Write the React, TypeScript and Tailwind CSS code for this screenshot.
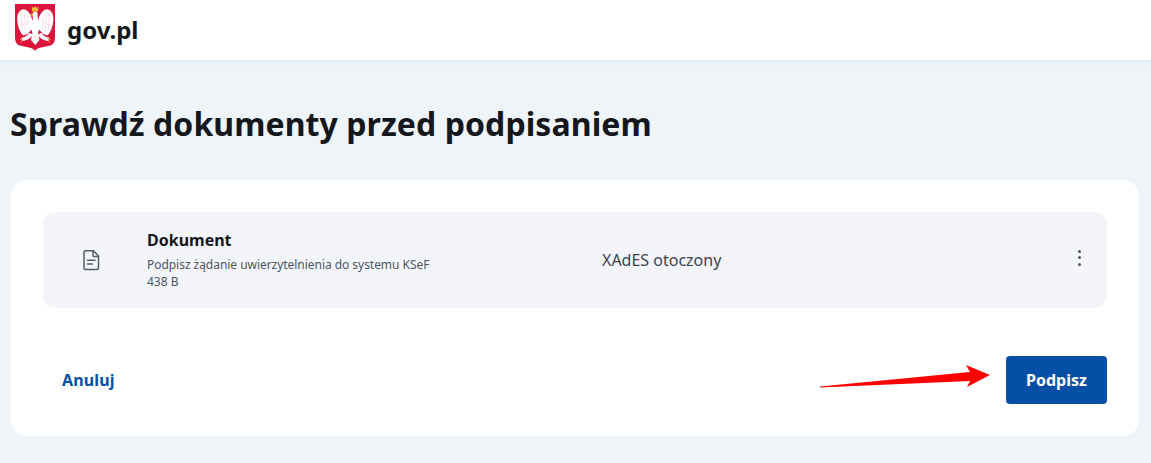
import React from "react";

function Wing(props: { flip?: boolean }) {
  return (
    <g transform={props.flip ? "translate(40.600 0) scale(-1 1)" : undefined}>
      <path d="M17 15C15.500 9 11 4.500 7.500 5.500 3.500 6.500 1.800 11.500 2.300 17 2.800 23 5 28 8 31.500L12.500 30 17 25Z" fill="#ffffff" />
      <path d="M6 9L7.500 27M9.200 8L10.300 27M12.300 10.500L13 25M4 21.500C8 21 12 19 15 16.500" stroke="#f0c4cd" strokeWidth=".5" fill="none" />
      <path d="M14 29C12.500 31 10.500 33.500 6.500 33.500L7.500 37C12 36.500 16 34 18 30.500Z" fill="#ffffff" />
      <path d="M7 34L5 36M7.500 36L6 38.500" stroke="#f5c242" strokeWidth=".9" />
    </g>
  );
}

function Crest() {
  return (
    <svg width="40" height="47" viewBox="0 0 40 47" className="block">
      <path d="M0 0H40V34Q40 41 33 42L24 44Q21 45 20 47Q19 45 16 44L7 42Q0 41 0 34Z" fill="#dc143c" />
      <Wing />
      <Wing flip />
      <path d="M18 15C17 11 17.500 7.500 20.500 7.500 22.500 7.500 23 9.500 22.500 11L23 15C25.500 18 25 25 23 29L24.500 36 20.300 41 16 36 17.500 29C15.500 25 15.500 18 18 15Z" fill="#ffffff" />
      <path d="M18.500 30L18 37M20.300 30V39M22 30L22.500 37" stroke="#f0c4cd" strokeWidth=".5" fill="none" />
      <path d="M17 7.500L16.700 2.500 18.500 4 20 2 21.500 4 23.300 2.500 23 7.500Z" fill="#f0b93a" />
      <path d="M18 9L15 10.800 18 12Z" fill="#f0b93a" />
    </svg>
  );
}

function DocIcon() {
  return (
    <svg width="24" height="24" viewBox="0 0 24 24" fill="none" stroke="#565e69" strokeWidth="1.500" strokeLinecap="round" strokeLinejoin="round" className="block">
      <path d="M6.500 2.800H14.500L19.500 8V20A1.500 1.500 0 0 1 18 21.500H6.500A1.500 1.500 0 0 1 5 20V4.300A1.500 1.500 0 0 1 6.500 2.800Z" />
      <path d="M14 3V7.500A1 1 0 0 0 15 8.500H19.500" />
      <path d="M8.500 12.300H16M8.500 16H13.500" />
    </svg>
  );
}

function Arrow() {
  return (
    <svg width="172" height="30" viewBox="0 0 172 30" className="block">
      <path d="M0 26.500L150 12 146 5 170 15 147 27 150 21 0 27.500Z" fill="#ff0000" />
    </svg>
  );
}

export default function App() {
  return (
    <div className="min-h-[463px] bg-[#eff4f9] font-['Noto_Sans',sans-serif] text-[#14171c]">
      <header className="flex h-[60px] items-center gap-3 bg-white pl-[15px] shadow-[0_1px_4px_rgba(180,195,215,0.35)]">
        <div className="mb-[5px]"><Crest /></div>
        <span className="text-[24px] leading-8 font-bold">gov.pl</span>
      </header>
      <main className="px-[11px] pt-[44px]">
        <h1 className="-ml-px text-[32px] leading-[40px] font-bold tracking-[0.08px]">Sprawdź dokumenty przed podpisaniem</h1>
        <section className="mt-[36px] mr-[1px] rounded-2xl bg-white px-8 pt-8 pb-[32px]">
          <div className="flex h-[96px] items-center rounded-xl bg-[#f3f5fb]">
            <div className="flex w-[104px] justify-center pr-[8px]"><DocIcon /></div>
            <div className="w-[455px]">
              <div className="text-[16px] leading-[20px] font-bold">Dokument</div>
              <div className="mt-[6px] text-[12px] leading-[18px] tracking-[-0.04px] text-[#4c5560]">Podpisz żądanie uwierzytelnienia do systemu KSeF</div>
              <div className="text-[12px] leading-[16px] text-[#4c5560]">438 B</div>
            </div>
            <div className="flex-1 text-[16px] leading-6 text-[#3b4450]">XAdES otoczony</div>
            <div className="mr-[26px] mb-[5px] flex flex-col gap-[3.500px]">
              <span className="size-[3px] rounded-full bg-[#4b5563]" />
              <span className="size-[3px] rounded-full bg-[#4b5563]" />
              <span className="size-[3px] rounded-full bg-[#4b5563]" />
            </div>
          </div>
          <div className="mt-[48px] flex items-center justify-between">
            <button className="ml-[19px] text-[16px] leading-6 font-bold tracking-[0.15px] text-[#0550a6]">Anuluj</button>
            <div className="flex items-center gap-[14px]">
              <div className="mb-[10px]"><Arrow /></div>
              <button className="h-[48px] w-[101px] rounded bg-[#0550a6] text-[16px] font-bold text-white">Podpisz</button>
            </div>
          </div>
        </section>
      </main>
    </div>
  );
}
